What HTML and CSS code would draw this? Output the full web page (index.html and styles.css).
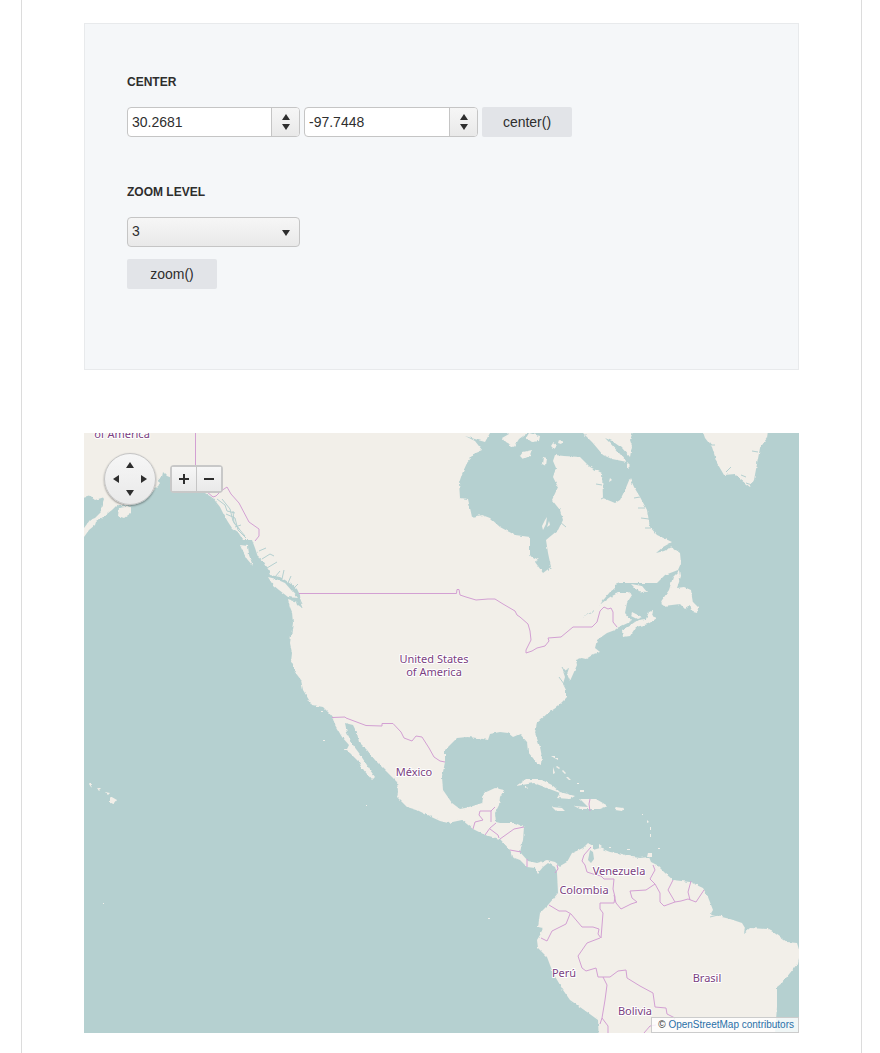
FILE: index.html
```html
<!DOCTYPE html>
<html lang="en">
<head>
<meta charset="utf-8">
<title>Map API</title>
<link rel="stylesheet" href="styles.css">
</head>
<body>
<main class="page">
  <form class="panel">
    <section class="group">
      <h4 class="heading">CENTER</h4>
      <div class="row">
        <div class="spinner">
          <input class="spinner-input" type="text" value="30.2681" aria-label="Latitude">
          <div class="spinner-buttons">
            <button class="spin" type="button" aria-label="Increase latitude"><span class="arrow up"></span></button>
            <button class="spin" type="button" aria-label="Decrease latitude"><span class="arrow down"></span></button>
          </div>
        </div>
        <div class="spinner">
          <input class="spinner-input" type="text" value="-97.7448" aria-label="Longitude">
          <div class="spinner-buttons">
            <button class="spin" type="button" aria-label="Increase longitude"><span class="arrow up"></span></button>
            <button class="spin" type="button" aria-label="Decrease longitude"><span class="arrow down"></span></button>
          </div>
        </div>
        <button class="action" type="button">center()</button>
      </div>
    </section>
    <section class="group">
      <h4 class="heading">ZOOM LEVEL</h4>
      <div class="dropdown">
        <select class="select" aria-label="Zoom level"><option>1</option><option>2</option><option selected>3</option><option>4</option></select>
        <span class="arrow down dropdown-arrow"></span>
      </div>
      <button class="action" type="button">zoom()</button>
    </section>
  </form>

  <div class="map">
    <svg class="tiles" viewBox="84 433 715 600" preserveAspectRatio="xMidYMid slice" role="img" aria-label="Map of the Americas">
      <defs>
        <filter id="coast" filterUnits="userSpaceOnUse" x="70" y="420" width="745" height="630">
          <feTurbulence type="fractalNoise" baseFrequency="0.22" numOctaves="2" seed="4" result="n"/>
          <feDisplacementMap in="SourceGraphic" in2="n" scale="3" xChannelSelector="R" yChannelSelector="G"/>
        </filter>
      </defs>
      <rect class="water" x="84" y="433" width="715" height="600"/>
      <g class="land" filter="url(#coast)">
        <path d="M74 423V497L84 497 89 495.500 95 500 103 497.500 104 499 101 508 101 512 95 518 90 520 84 528 74 534V546L84 537 89 530 95 525 96 522 103 517 112 510 117 505 123 506 132 504 148 497 155 489 159 485 158 480 162 477 163 472 167 476 172 478 185 488 205 493 213 498 220 507 224 515 228 522 232 528 238 532 243 540 252 540 255 548 258 557 264 562 267 567 270 575 280 577 290 583 297 589 300 595 301 607 298 605 297 602 294 601 288 599 290 607 292 612 293 623 290 643 292 653 291 662 295 672 301 680 303 690 312 705 323 707 329 713 333 718 335 725 342 737 349 745 347 749 343 749 350 753 359 762 362 768 372 780 375 777 370 770 365 762 359 753 353 745 347 733 345 723 353 725 357 733 359 742 367 750 375 760 387 772 397 782 398 792 397 797 407 807 417 810 427 815 440 821 448 823 462 820 473 829 485 835 500 839 510 850 512 857 520 860 527 867 535 868 538 873 543 867 548 863 555 867 557 873 558 893 548 905 540 913 538 927 543 928 540 935 537 940 538 948 547 957 553 973 563 990 570 1000 587 1012 598 1020 599 1043H774L775 1033 777 1007 777 987 782 983 790 973 798 963 800 953 797 943 787 942 773 932 767 929 750 928 744 933 745 928 742 923 730 919 722 917 719 923 723 916 710 915 713 910 708 897 703 888 690 882 673 880 665 873 657 865 651 862 649 857 640 858 633 857 622 854 610 852 600 848 593 850 593 846 588 843 583 848 572 853 567 862 560 866 555 862 547 860 537 863 528 861 520 852 523 840 524 827 515 823 500 823 496 822 495 813 499 805 500 797 504 790 495 788 484 793 482 803 470 807 460 809 452 803 443 790 442 777 445 762 445 750 457 738 467 737 478 738 488 740 490 734 500 732 508 733 513 737 520 734 527 742 528 752 537 763 541 765 542 757 540 747 535 733 537 723 548 713 557 707 566 698 566 690 563 684 565 677 563 671 569 668 567 674 570 681 574 672 577 665 576 660 587 656 600 652 595 648 597 640 607 633 615 630 617 628 630 622 631 620 625 613 627 603 632 595 628 592 620 592 610 597 602 603 592 613 583 617 597 609 604 599 610 592 615 588 615 585 620 583 657 583 665 575 678 570 681 563 680 553 672 547 664 551 656 553 663 547 672 542 657 535 650 527 647 510 640 497 634 487 630 478 625 490 620 500 615 503 603 498 602 473 590 467 580 457 564 456 555 455 553 461 556 468 553 477 558 487 552 500 560 510 563 520 558 530 546 540 548 553 551 567 543 573 530 555 530 537 515 535 500 527 490 518 482 515 472 517 468 499 460 498 459 483 462 474 467 463 475 453 482 450 475 441 465 436 478 440 485 442 490 433V423Z"/>
        <path d="M575 423 583 433 592 442 603 455 612 459 627 462 620 454 610 443 605 438 612 441 622 448 630 457 632 446 630 440 636 423Z"/>
        <path d="M498 423 509 434 502 438 505 442 514 447 519 439 526 434V423ZM529 433 540 436 539 441 532 442 526 438ZM523 452 532 450 530 456 523 459 520 456ZM543 457 547 458 546 466 542 464ZM553 443 557 446 554 449 551 446ZM559 440 563 442 561 444 558 443ZM610 478 612 480 609 482ZM531 556 539 560 535 562 531 559ZM627 463 630 466 627 469Z"/>
        <path d="M700 423 705 438 712 447 717 463 724 475 735 474 741 480 750 487 754 480 757 464 760 448 767 438 769 423Z"/>
        <path d="M680 570 673 577 669 590 660 603 664 606 680 604 685 609 690 606 693 612 697 613 698 607 693 602 691 590 684 587 677 588 681 576ZM631 584 642 586 647 592 638 591ZM632 612 642 617 637 619 631 616ZM622 630 632 624 638 620 646 619 649 612 653 611 652 616 657 618 648 624 636 627 630 636 623 637Z"/>
        <path d="M268 577 276 579 285 583 292 591 298 598 288 597 279 590 273 585ZM240 545 248 546 249 555 253 566 247 559 243 552ZM119 508 131 506 131 513 124 518 118 516Z"/>
        <path d="M516 786 526 779 540 779 552 785 560 792 575 796 570 799 557 798 560 793 547 788 534 783ZM552 807 562 808 565 811 556 811ZM574 806 588 807 580 799 596 799 608 806 600 809 580 809ZM616 807 624 808 622 811 615 810ZM577 657 587 655 594 654 586 659ZM525 786 528 788 525 789Z"/>
        <path d="M110 796 117 800 114 804 110 803ZM97 788 101 789 99 791ZM105 792 110 793 108 795ZM89 784 92 784 91 787Z"/>
      </g>
      <g class="land">
        <path d="M551 756h4v2h3v2M553 767l2 6-2 1zM557 766l3 2-1 1-3-2zM563 770l3 3-1 1-3-3zM566 777h2l3 3h-2zM577 783h2v1h-2zM580 790h4v2h-4zM323 740h2v1h-2zM366 805h1v1h-1zM103 903h1v1h-1zM488 918h2v1h-2zM642 814h1v1h-1zM647 820l2 2-2 1zM650 827h1v3h-1zM650 834h1v3h-1zM658 848h2v1h-2zM599 844l3 2-3 2zM609 847h2v1h-2zM627 849h3v1h-3zM648 853h4v4h-5zM316 706h3v1h-3zM321 711h2v1h-2zM545 520l2-3-1 7-3 6-1-4zM549 521l1 4-3 2z"/>
      </g>
      <path class="water" d="M590 850 593 852 594 859 591 863 588 860 589 855Z"/>
      <g class="inlets">
        <path d="M217 499l8 6 2 6 8 2M222 499l8 10 3 12 7 9M226 514l9 4 3 12 8 8M233 511l1 12 11 13M235 527l6-2M259 551l7-3M262 559l8-5 4 2M267 568l10-6M275 577l5-6M282 579l2-9M288 583l3-7M293 589l5-5M298 598l4 10M295 590l7 14M596 484l6 1M601 499l6-3M560 522l6 5M564 684l-5-7M567 676l-5-9"/>
        <path d="M640 497l-6 1M645 508l-7 0M649 519l-8-1M651 528l-6 0M672 547l-10 2M710 917l12-3M301 680l-1 3M752 485l-6-2M746 477l-5-2M758 452l-6-1M710 445l5 0M726 472l5-5"/>
      </g>
      <g class="borders">
        <path d="M195.500 433V466L200 486 213 497 216 496 221 491 227 487 231 494 239 503 249 522 259 529V536L255 541M299 593.500H456.500L457 589.500H459L460 595 466 597 476 600 488 599 495 599 503 604 515 611 517 615 520 617 528 624 530 631 531 640 526 650 526 653 532 651 537 648 545 646 549 641 548 638 561 637 573 627H592L597 622 600 611 604 607 608 609 611 608 613 612V622L617 627"/>
        <path d="M332 717.500 345 717 346 718 366 725.500 382 726 382 723.500H393L401 732 404 738 412 741 416 736 422 737 429 748 434 757 440 761 445 762"/>
        <path d="M473 829 475 822 483 820 479 815 480 811 491 811 495 807M491 811V822M496 823 490 828 485 835M490 829 498 835 499 838M500 839 507 834 514 829 524 827M510 850 521 852M527 867V859M555 873 558 869 557 865M591 847 584 855 582 861 585 865 587 872 593 874 601 876 604 879H614L613 889 615 897 614 903H600V909L603 913 601 938 598 934 599 929 593 927 582 927 571 914 566 911 559 911 549 905M570 914 566 924 552 931 547 941 541 938M653 865 655 870 650 879 655 884 646 890 630 891 632 898 637 902 631 904 621 909 616 903 614 895M655 884 660 893 660 902 664 906 675 902 681 901 688 899 696 902 704 890M673 880 668 890 675 902M691 881 688 892 690 900M600 938 587 943 578 956 582 968 586 971 596 968 598 977 610 977 618 971 626 970 627 978 640 986 653 993 655 1007 666 1008 667 1014 675 1018 670 1025M603 977 607 985 605 1000 602 1018 608 1026V1033M602 1018 600 1024M644 1033 650 1026 656 1025M590 799 589 804 590 811"/>
      </g>
      <g class="places">
        <text x="122" y="438">of America</text>
        <text x="434" y="663">United States</text>
        <text x="434" y="676">of America</text>
        <text x="414" y="776">México</text>
        <text x="619" y="875">Venezuela</text>
        <text x="584" y="894">Colombia</text>
        <text x="564" y="977">Perú</text>
        <text x="707" y="982">Brasil</text>
        <text x="635" y="1015">Bolivia</text>
      </g>
    </svg>
    <div class="controls">
      <div class="navigator">
        <button class="nav north" type="button" aria-label="Pan up"><span class="arrow up"></span></button>
        <button class="nav west" type="button" aria-label="Pan left"><span class="arrow left"></span></button>
        <button class="nav east" type="button" aria-label="Pan right"><span class="arrow right"></span></button>
        <button class="nav south" type="button" aria-label="Pan down"><span class="arrow down"></span></button>
      </div>
      <div class="zoom">
        <button class="zoom-button" type="button" aria-label="Zoom in"><svg width="12" height="12" viewBox="0 0 12 12"><path d="M1 5h4V1h2v4h4v2H7v4H5V7H1z"/></svg></button>
        <button class="zoom-button" type="button" aria-label="Zoom out"><svg width="12" height="12" viewBox="0 0 12 12"><path d="M1 5h10v2H1z"/></svg></button>
      </div>
    </div>
    <div class="attribution">© <a href="#">OpenStreetMap contributors</a></div>
  </div>
</main>
</body>
</html>
```
FILE: styles.css
```css
* { box-sizing: border-box; }

body {
  margin: 0;
  background: #fff;
  color: #2e2e2e;
  font-family: "Liberation Sans", Arial, sans-serif;
  font-size: 14px;
}

button, input, select { font: inherit; color: inherit; margin: 0; }
button { padding: 0; cursor: pointer; }

.page {
  min-height: 100vh;
  margin: 0 18px 0 21px;
  padding: 23px 62px 20px;
  border: solid #dcdcdc;
  border-width: 0 1px;
}

.panel {
  padding: 50px 42px 80px;
  background: #f5f7f9;
  border: 1px solid #e8eaec;
}

.group + .group { margin-top: 47px; }

.heading {
  margin: 0 0 17px;
  font-size: 12px;
  line-height: 16px;
}

.row { display: flex; flex-wrap: wrap; gap: 4px; }

.spinner {
  display: flex;
  width: 173px;
  height: 30px;
  overflow: hidden;
  border: 1px solid #c5c5c5;
  border-radius: 4px;
  background: #fff;
}
.spinner + .spinner { width: 174px; }

.spinner-input {
  flex: 1;
  min-width: 0;
  padding: 0 4px;
  border: 0;
  background: transparent;
}

.spinner-buttons {
  display: flex;
  flex-direction: column;
  width: 28px;
  padding: 4px 0;
  border-left: 1px solid #c5c5c5;
  background: linear-gradient(#f6f6f6, #e9e9e9);
}

.spin {
  display: grid;
  flex: 1;
  place-items: center;
  border: 0;
  background: none;
}

.arrow { display: block; width: 0; height: 0; border: 4px solid transparent; }
.up { border-width: 0 4px 6px; border-bottom-color: #2e2e2e; }
.down { border-width: 6px 4px 0; border-top-color: #2e2e2e; }
.left { border-width: 4px 6px 4px 0; border-right-color: #2e2e2e; }
.right { border-width: 4px 0 4px 6px; border-left-color: #2e2e2e; }

.action {
  display: block;
  width: 90px;
  height: 30px;
  border: 0;
  border-radius: 2px;
  background: #e2e4e8;
}

.dropdown { position: relative; width: 173px; margin-bottom: 12px; }

.select {
  display: block;
  width: 100%;
  height: 30px;
  padding: 0 24px 2px 4px;
  appearance: none;
  border: 1px solid #c5c5c5;
  border-radius: 4px;
  background: linear-gradient(#f6f6f6, #e9e9e9);
}

.dropdown-arrow { position: absolute; top: 13px; right: 10px; pointer-events: none; }

.map {
  position: relative;
  height: 600px;
  margin-top: 63px;
  overflow: hidden;
  background: #b5d0d0;
}

.tiles { display: block; width: 100%; height: 100%; }
.water { fill: #b5d0d0; }
.land { fill: #f2efe9; }
.inlets { fill: none; stroke: #b5d0d0; stroke-width: 1; }
.borders { fill: none; stroke: #d3a0d3; stroke-width: 1; }
.places {
  fill: #7b4181;
  stroke: #fff;
  stroke-width: 2px;
  stroke-linejoin: round;
  paint-order: stroke;
  font: 11px "Noto Sans", sans-serif;
  text-anchor: middle;
}

.controls {
  position: absolute;
  top: 20px;
  left: 20px;
  display: flex;
  align-items: center;
  gap: 14px;
}

.navigator {
  display: grid;
  grid-template: repeat(3, 1fr) / repeat(3, 1fr);
  width: 52px;
  height: 52px;
  padding: 4px;
  border: 1px solid #c5c5c5;
  border-radius: 50%;
  background: linear-gradient(#f6f6f6, #e9e9e9);
  box-shadow: 0 1px 2px #0006;
}

.nav { display: grid; place-items: center; border: 0; background: none; }
.north { grid-area: 1 / 2; }
.west { grid-area: 2 / 1; }
.east { grid-area: 2 / 3; }
.south { grid-area: 3 / 2; }

.zoom {
  display: flex;
  border: 2px solid #c8c8c8;
  border-radius: 4px;
}

.zoom-button {
  display: grid;
  place-items: center;
  width: 24px;
  height: 24px;
  border: 0;
  background: linear-gradient(#f6f6f6, #e9e9e9);
  fill: #2e2e2e;
}
.zoom-button + .zoom-button { width: 25px; border-left: 1px solid #c5c5c5; }

.attribution {
  position: absolute;
  right: 0;
  bottom: 0;
  padding: 0 4px 0 6px;
  border: 1px solid #ccc;
  background: #fffc;
  font-size: 10px;
  line-height: 14px;
}
.attribution a { color: #2a70a8; text-decoration: none; }
```
